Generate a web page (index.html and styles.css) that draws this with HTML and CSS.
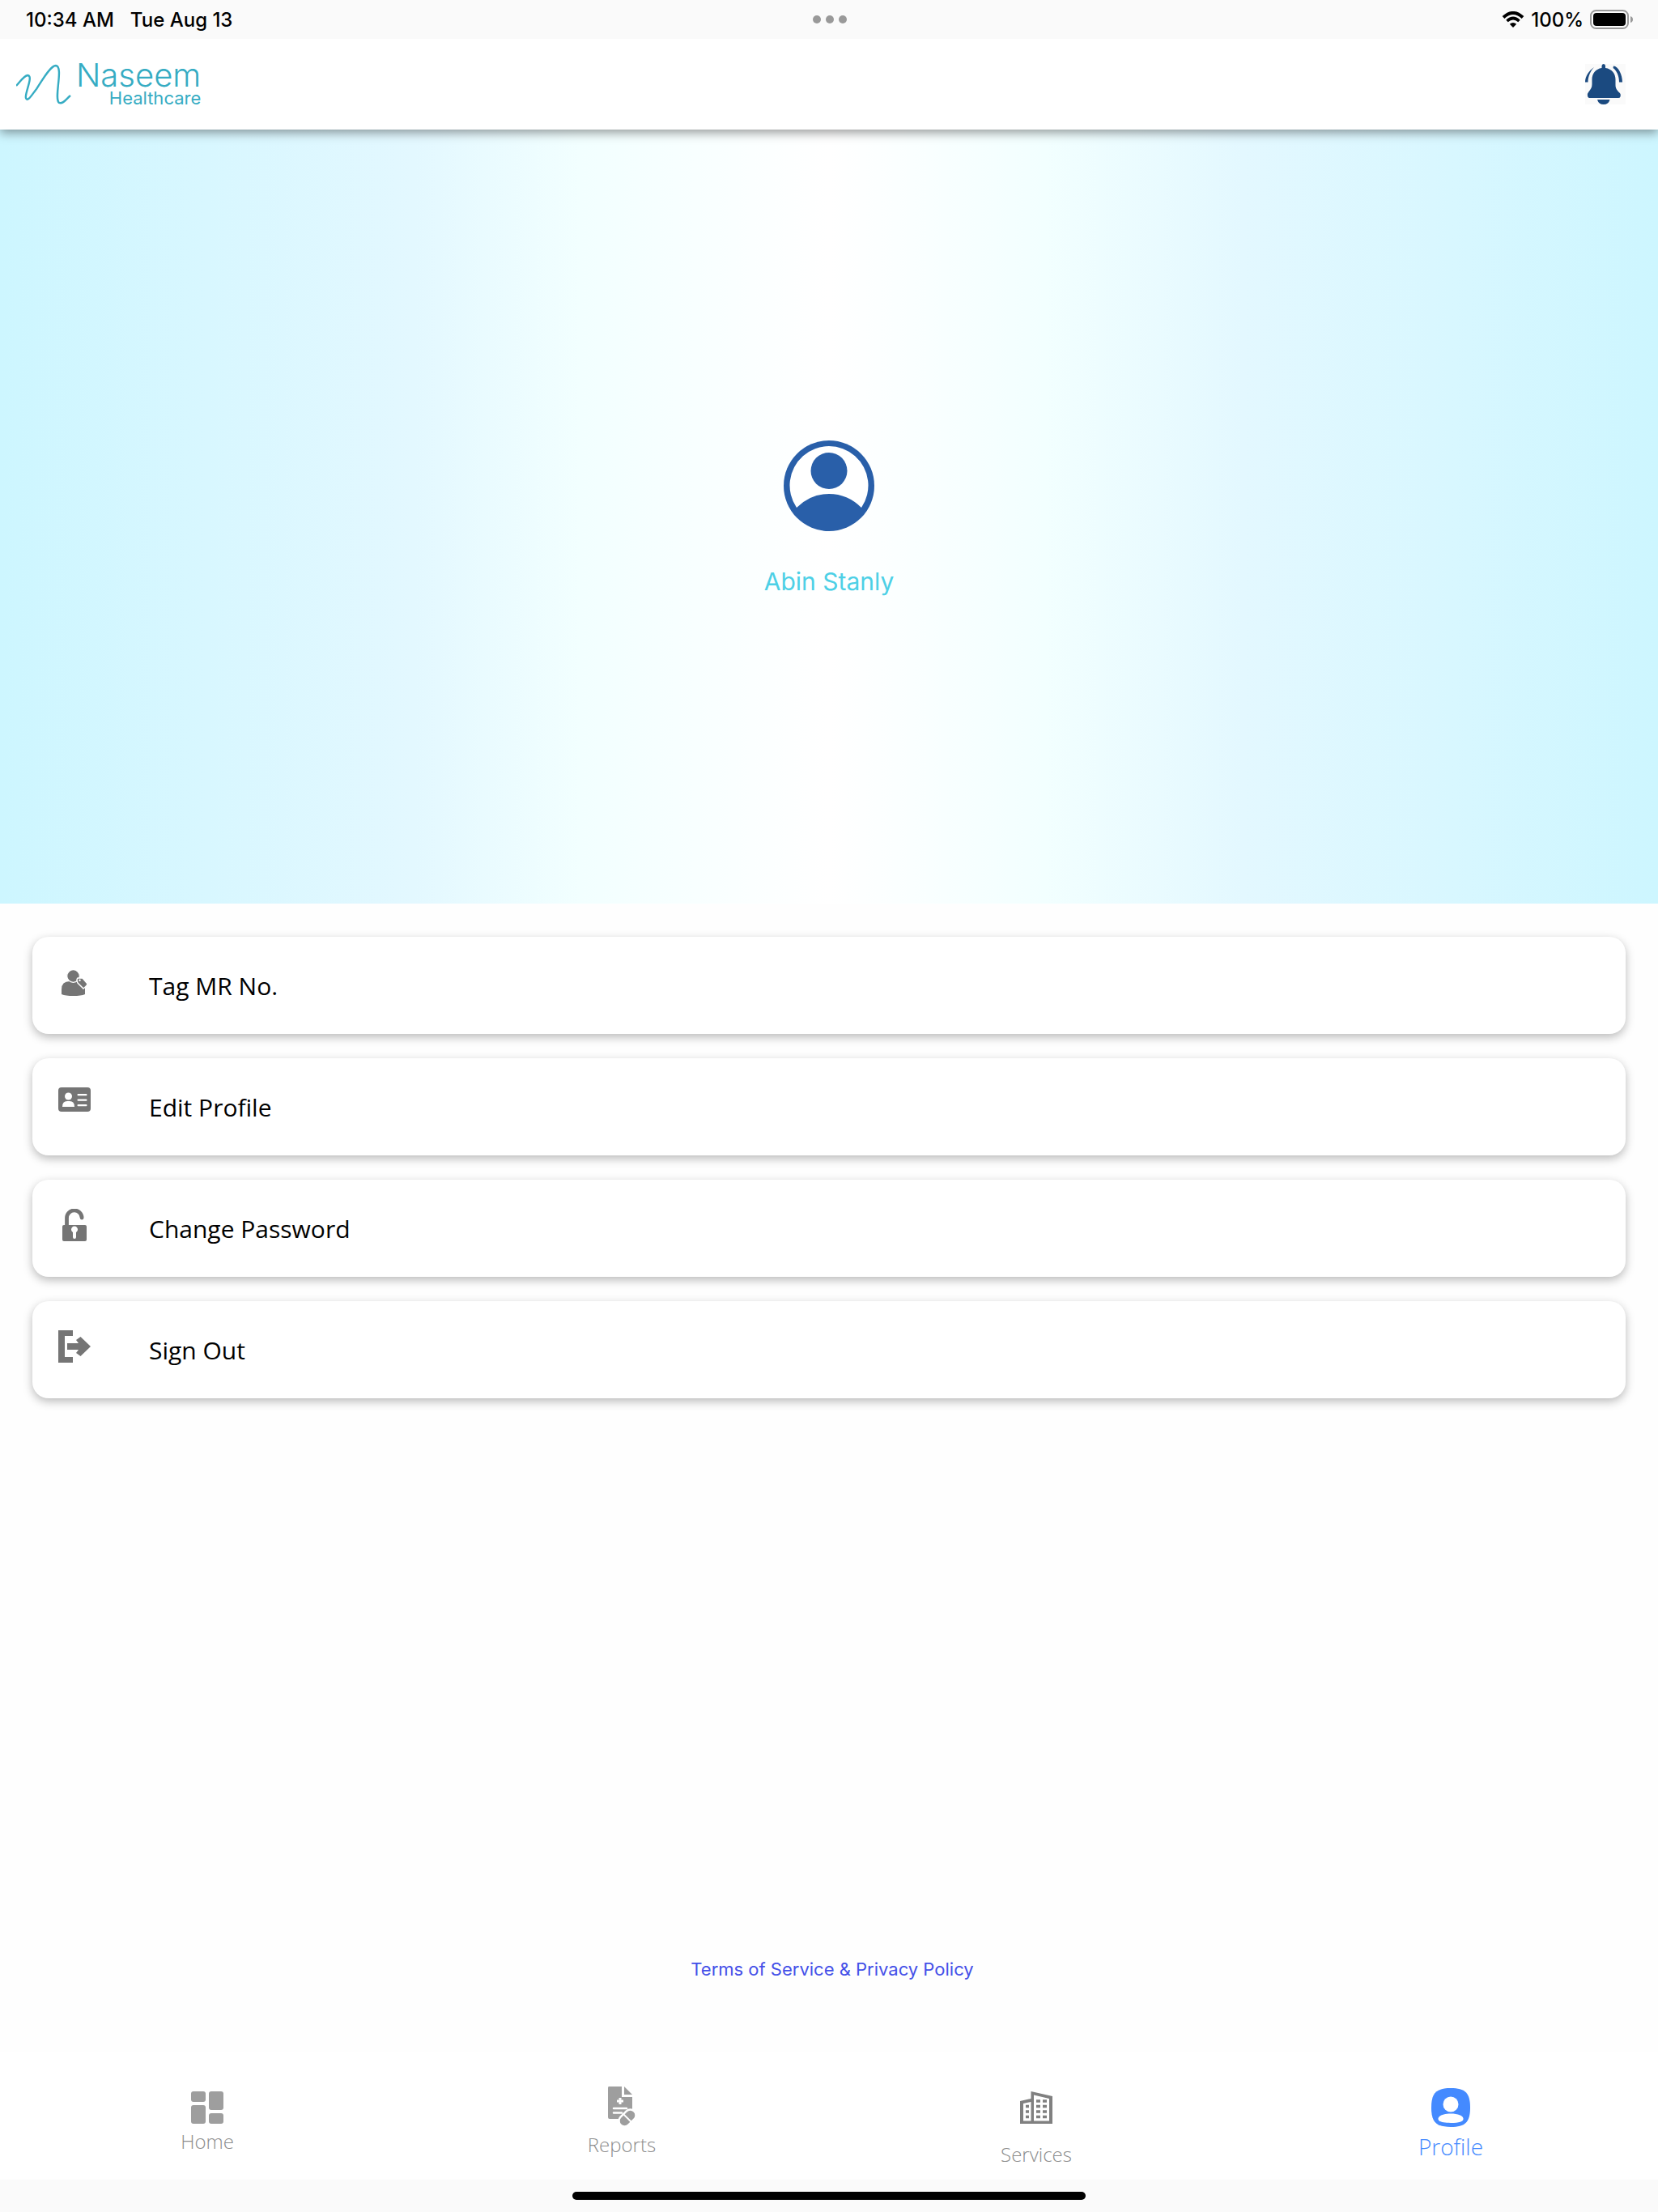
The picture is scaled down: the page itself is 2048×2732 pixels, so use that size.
FILE: index.html
```html
<!DOCTYPE html>
<html lang="en">
<head>
    <meta charset="UTF-8">
    <meta name="viewport" content="width=device-width, initial-scale=1.0">
    <title>Naseem Healthcare - Profile</title>
    <link rel="stylesheet" href="styles.css">
</head>
<body>
    <div class="status-bar">
        <div class="status-left">
            <span>10:34 AM</span>
            <span>Tue Aug 13</span>
        </div>
        <div class="status-dots"><i></i><i></i><i></i></div>
        <div class="status-right">
            <svg class="wifi" width="28" height="20" viewBox="0 0 28 20" aria-hidden="true">
                <path d="M2 7.500Q14 -3.500 26 7.500" fill="none" stroke="#000" stroke-width="4"/>
                <path d="M6.500 12Q14 5 21.500 12" fill="none" stroke="#000" stroke-width="3.600"/>
                <path d="M14 20L9.800 15.800Q14 12.200 18.200 15.800Z"/>
            </svg>
            <span>100%</span>
            <svg class="battery" width="54" height="24" viewBox="0 0 54 24" aria-hidden="true">
                <rect x="1" y="1" width="46" height="22" rx="6.500" fill="none" stroke="#999" stroke-width="2"/>
                <rect x="4" y="4" width="40" height="16" rx="4"/>
                <path d="M50 8Q53 9 53 12T50 16Z" fill="#999"/>
            </svg>
        </div>
    </div>

    <header class="header">
        <a class="logo" href="#" aria-label="Naseem Healthcare">
            <svg width="68" height="50" viewBox="0 0 68 50" aria-hidden="true">
                <path d="M0 27C5 22 9 15 14 14C22 14 10 37 12 42C14 48 20 37 25 31C31 22 42 2 49 2C59 3 46 43 53 48C58 50 62 43 67 39" fill="none" stroke="#36acc3" stroke-width="2.400"/>
            </svg>
            <span class="logo-text">
                <span class="logo-name">Naseem</span>
                <span class="logo-sub">Healthcare</span>
            </span>
        </a>
        <button type="button" class="bell" aria-label="Notifications">
            <svg width="50" height="50" viewBox="0 0 50 50" aria-hidden="true">
                <path d="M20.500 5V2.500Q20.500 0 22.800 0T25 2.500V5C33 6 37.500 12 37.500 19V26C37.500 31 40 33 43 36Q44.500 38 43.500 40.500Q43 42 41 42H5Q4 42 3 40Q2 37 4 35C7 31 8.500 29 8.500 25V19C8.500 12 13 6 20.500 5Z"/>
                <path d="M15 44H30.500Q29 50 22.800 50T15 44Z"/>
                <path d="M11 4C5 8 0 15 0 22.500H3.500C3.500 15 7 8 11 4Z"/>
                <path d="M35 2.500C41 3 46 13 46 22.500H42C42 15 39 8 34.500 5Z"/>
            </svg>
        </button>
    </header>

    <section class="hero">
        <svg width="112" height="112" viewBox="0 0 112 112" aria-hidden="true">
            <circle cx="56" cy="56" r="56" fill="#295fa9"/>
            <path d="M16 83A48.500 48.500 0 1 1 96 83Q79 66 56 66T16 83Z" fill="#fff"/>
            <circle cx="56" cy="37.500" r="22.500" fill="#295fa9"/>
        </svg>
        <h1 class="user-name">Abin Stanly</h1>
    </section>

    <main class="content">
        <button type="button" class="menu-item">
            <svg width="40" height="40" viewBox="0 0 40 40" aria-hidden="true">
                <path d="M4 35V29Q4 19 14 19H23L33 27V35Q28 37 18.500 37T4 35Z"/>
                <circle cx="18.500" cy="12.500" r="7.800" stroke="#fff" stroke-width="1.200"/>
                <path d="M24 15L30 15L36 22Q36 24 31 28L24 21Q22 17 24 15Z" stroke="#fff" stroke-width="1.500"/>
                <circle cx="26.500" cy="17.800" r="1.200" fill="#fff"/>
            </svg>
            <span>Tag MR No.</span>
        </button>
        <button type="button" class="menu-item">
            <svg class="icon-raised" width="40" height="30" viewBox="0 0 40 30" aria-hidden="true">
                <rect width="40" height="30" rx="4"/>
                <g fill="#fff">
                    <circle cx="12.500" cy="11" r="4.500"/>
                    <path d="M5 24Q5 17 11 17H14Q20 17 20 24Z"/>
                    <rect x="23.500" y="8" width="12" height="2.200" rx="1"/>
                    <rect x="23.500" y="14.500" width="12" height="2.200" rx="1"/>
                    <rect x="23.500" y="21" width="12" height="2.200" rx="1"/>
                </g>
            </svg>
            <span>Edit Profile</span>
        </button>
        <button type="button" class="menu-item">
            <svg width="40" height="40" viewBox="0 0 40 40" aria-hidden="true">
                <path d="M10.500 21V11.500A9.300 9.300 0 0 1 29.100 11" fill="none" stroke="#757575" stroke-width="4.800" stroke-linecap="round"/>
                <rect x="5" y="20" width="30" height="20" rx="2"/>
                <path d="M18 29A4 4 0 1 1 22 29V35Q22 37 20 37T18 35Z" fill="#fff"/>
            </svg>
            <span>Change Password</span>
        </button>
        <button type="button" class="menu-item">
            <svg width="40" height="40" viewBox="0 0 40 40" aria-hidden="true">
                <path d="M0 0H18V7H8V33H18V40H0Z"/>
                <path d="M11 16H25L22 12L27.500 8L40 20L27.500 32L22 28L25 24H11Z"/>
            </svg>
            <span>Sign Out</span>
        </button>
        <a class="terms" href="#">Terms of Service &amp; Privacy Policy</a>
    </main>

    <nav class="bottom-nav">
        <a class="nav-home" href="#">
            <svg width="40" height="40" viewBox="0 0 40 40" aria-hidden="true">
                <rect width="18" height="13" rx="3"/>
                <rect x="22" width="18" height="23" rx="3"/>
                <rect y="17" width="18" height="23" rx="3"/>
                <rect x="22" y="27" width="18" height="13" rx="3"/>
            </svg>
            <span>Home</span>
        </a>
        <a class="nav-reports" href="#">
            <svg width="36" height="50" viewBox="0 0 36 50" aria-hidden="true">
                <path d="M2 0H18V13H31V40H3Q1 40 1 38V2Q1 0 2 0Z"/>
                <path d="M21 0L31 10H21Z"/>
                <path d="M16 14V22M12 18H20" stroke="#fff" stroke-width="3"/>
                <path d="M8 27H24M8 32.500H18" stroke="#fff" stroke-width="2.500" stroke-linecap="round"/>
                <g transform="rotate(-45 25 39)">
                    <rect x="13" y="32" width="24" height="14" rx="7" stroke="#fff" stroke-width="2.500"/>
                    <path d="M25 31V46" stroke="#fff" stroke-width="2"/>
                </g>
            </svg>
            <span>Reports</span>
        </a>
        <a class="nav-services" href="#">
            <svg width="40" height="40" viewBox="0 0 40 40" aria-hidden="true">
                <path d="M0 12L13.500 9V0L40 6V40H0Z" fill="#808080"/>
                <path d="M4 15L13.500 13V36.500H4ZM17 4.500L36 9V36.500H17Z" fill="#fff"/>
                <path d="M7 18.500H11M7 25H11M7 31.500H11M20 12H25M28 12H33M20 18.500H25M28 18.500H33M20 25H25M28 25H33M20 31.500H25M28 31.500H33" stroke="#808080" stroke-width="3.400"/>
            </svg>
            <span>Services</span>
        </a>
        <a class="nav-profile" href="#" aria-current="page">
            <svg width="48" height="48" viewBox="0 0 48 48" aria-hidden="true">
                <path d="M24 0C42 0 48 6 48 24S42 48 24 48S0 42 0 24S6 0 24 0Z"/>
                <circle cx="24" cy="20" r="9.500" fill="#fff"/>
                <path d="M8.500 37.500C9 34 15 31.500 24 31.500S39 34 39.500 37.500C40 41 35 43 24 43S8 41 8.500 37.500Z" fill="#fff"/>
            </svg>
            <span>Profile</span>
        </a>
    </nav>
    <div class="home-bar"><div class="home-indicator"></div></div>
</body>
</html>
```

FILE: styles.css
```css
* { box-sizing: border-box; }
body { margin: 0; min-height: 100vh; display: flex; flex-direction: column; background: #fefefe; color: #000; font-family: "Open Sans", sans-serif; }
a { text-decoration: none; }
button { border: none; padding: 0; cursor: pointer; }
svg { display: block; flex-shrink: 0; }

/* sits above the header so its shadow only falls downwards */
.status-bar { position: relative; z-index: 2; display: grid; grid-template-columns: 1fr auto 1fr; align-items: center; height: 48px; padding: 0 30px 0 32px; background: #fafafa; font: 500 24px Inter, sans-serif; }
.status-left { display: flex; gap: 20px; }
.status-dots { display: flex; gap: 6px; }
.status-dots i { width: 10px; height: 10px; border-radius: 50%; background: #999; }
.status-right { display: flex; align-items: center; justify-content: flex-end; gap: 8px; }

.header { position: relative; z-index: 1; display: flex; align-items: center; justify-content: space-between; height: 112px; padding: 0 40px 0 20px; background: #fff; box-shadow: 0 4px 12px rgba(0, 0, 0, 0.4); }
.logo { display: flex; align-items: center; gap: 6px; color: #36acc3; font-family: Inter, sans-serif; }
.logo-text { display: flex; flex-direction: column; align-items: flex-end; }
.logo-name { font-size: 40px; font-weight: 300; line-height: 34px; }
.logo-sub { font-size: 22px; font-weight: 400; line-height: 22px; }
.bell { background: #fafafa; fill: #1b4a80; }

.hero { display: flex; flex-direction: column; align-items: center; justify-content: center; gap: 40px; min-height: 35vh; padding-top: 8px; background: linear-gradient(to right, #cdf6ff, #e3f8ff 25%, #f2ffff 35%, #fff 50%, #f2ffff 63%, #e3f8ff 75%, #cdf6ff); }
.user-name { margin: 0; color: #4dd0e6; font: 400 30px/44px Inter, sans-serif; }

.content { flex: 1; display: flex; flex-direction: column; gap: 30px; padding: 41px 40px 88px; }
.menu-item { display: flex; align-items: center; gap: 72px; height: 120px; padding: 0 32px; border-radius: 20px; background: #fff; box-shadow: 0 4px 12px rgba(0, 0, 0, 0.27); color: #000; fill: #757575; font: 400 30px "Open Sans", sans-serif; text-align: left; }
.menu-item svg { margin-bottom: 8px; }
.menu-item .icon-raised { margin-bottom: 18px; }
.terms { margin: auto auto 0; padding-left: 8px; color: #4450e8; font: 400 22px/28px Inter, sans-serif; }

.bottom-nav { display: grid; grid-template-columns: repeat(4, 1fr); height: 158px; padding-top: 43px; background: #fff; font-size: 24px; font-weight: 300; line-height: 32px; }
.bottom-nav a { display: flex; flex-direction: column; align-items: center; color: #8c8c8c; fill: #9e9e9e; }
.bottom-nav .nav-home { padding-top: 6px; gap: 6px; }
.bottom-nav .nav-reports { gap: 6px; }
.bottom-nav .nav-services { padding-top: 6px; gap: 22px; }
.bottom-nav .nav-profile { padding-top: 2px; gap: 8px; color: #448aff; fill: #448aff; font-size: 28px; }

.home-bar { display: flex; align-items: center; justify-content: center; height: 40px; background: #fafafa; }
.home-indicator { width: 31%; height: 10px; border-radius: 5px; background: #000; }
```
